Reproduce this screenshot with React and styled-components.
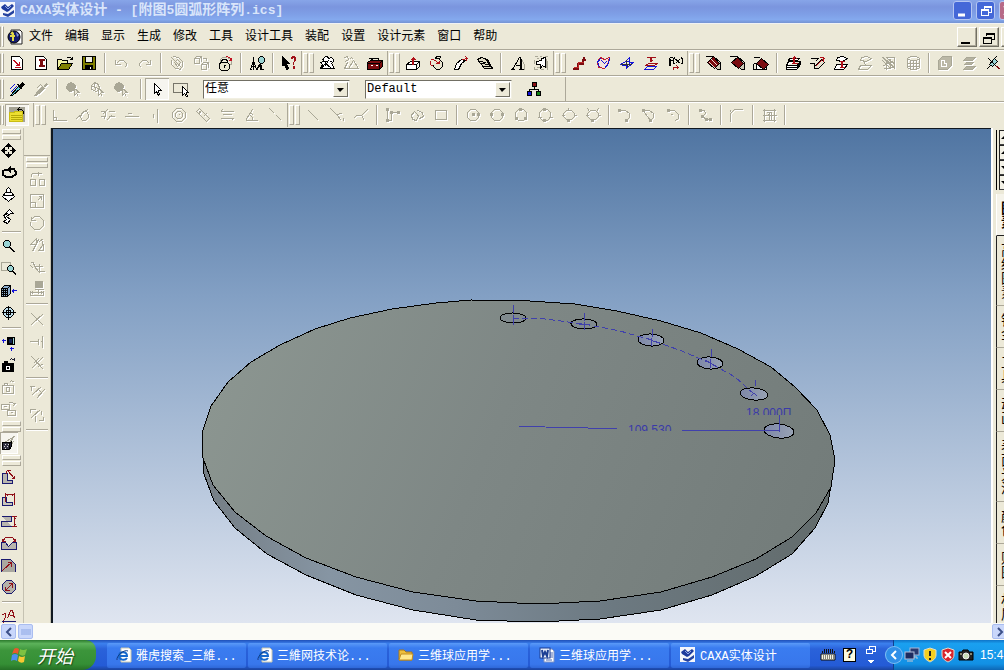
import styled, { createGlobalStyle, css } from 'styled-components';

const RED = '#7b0c10';
const BLUE = '#1414d8';
const TEAL = '#9ad4d4';
const GREY = '#a9a796';

// every shape is [path, stroke, fill], drawn on a 16 x 16 grid
const K = 'currentColor';
const icons = {
  newDoc: [['M2 1H10L13 4V14H2Z', K, '#fff'], ['M4 5L9 10M5 5L10 10M10 10V6M10 10H6M5 12H11', '#c01020']],
  importDoc: [['M2 1H10L13 4V14H2Z', K, '#fff'], ['M5 4H11M5 5H11M5 11H11M5 10H11M8 4V11M7 4V11M9 4V11', RED]],
  open: [['M0 14V4H4L5 5H10V8', K, '#f2f2a0'], ['M0 14L4 8H15L11 14Z', K, '#808000'], ['M9 2H13L15 4V1M15 4H12', K]],
  save: [['M1 1H14V14H1Z', K, '#808000'], ['M4 1H11V7H4Z', K, '#f0efe6'], ['M4 10H11V14H4Z', K, K], ['M9 11V13', '#fff']],
  undo: [['M2 4V9H7M3 8L6 5H10L13 8V10L11 12', K]],
  redo: [['M13 4V9H8M12 8L9 5H5L2 8V10L4 12', K]],
  orbit: [['M2 2L13 13M4 1L9 2L13 6V11L10 14M12 14L6 13L2 9V4M5 7L8 4L11 7L8 11Z', K]],
  cubes: [['M1 3H6V8H1ZM1 3L3 1H8L6 3M8 1V6M8 9H13V14H8ZM8 9L10 7H15L13 9M15 7V12M9 3H13V5', K]],
  lock: [['M3 7V4L5 2H9M10 3H14V9H12', GREY], ['M2 8L4 7H10L12 9V13L10 15H4L2 13Z', K, '#e9e5cf'], ['M4 7V5L6 4H8L10 5V7M7 10V12M6 10H8', K], ['M9 1L12 2L14 5M14 5V2M14 5H11', '#c01020']],
  find: [['M4 1V4M1 14L4 5L7 14M2 11H6M4 5V14M0 14H2M6 14H8M8 14L9 10M11 14V9', K], ['M9 3L11 1H13L15 3V6L13 8H11L9 6Z', K, TEAL], ['M11 8L9 12M12 9V14M12 14H14', K]],
  help: [['M1 1V10L3 9L5 14L7 13L5 8H8Z', K, K], ['M10 3V2H14V5L12 7V9M11 3V1H13M13 2V6L11 8M12 11H13V13H12Z', '#a01018']],
  workers: [['M4 3L6 1H8L9 3L12 2L14 4V6L12 8L15 13H1L3 9L1 7L4 6Z', K, '#fff'], ['M3 4L10 11M9 5L5 11M6 8L12 13M2 6H7M10 6H12M2 13L5 9', K]],
  workersOff: [['M1 2L4 1L5 4L2 6M6 4L8 2L10 4M4 7L1 13H15L10 5L5 13', K]],
  toolbox: [['M0 7L3 5H15V11L12 14H0Z', K, RED], ['M0 8H12V14M12 8L15 5M4 5V3H11V5', K], ['M1 3H4L7 6', K], ['M3 10H5M8 10H10', '#fff']],
  extrude: [['M1 9L5 6H14L11 9ZM1 9V14H11V9M11 14L14 11V6', K, '#fff'], ['M8 9V1M7 9V2M5 4H10M6 3H9', '#b01018']],
  spin: [['M7 1H11L10 4L13 7V11L10 14H7L4 11V9', K, '#e9e5d0'], ['M1 4H4L10 8V5M10 8H6M1 5V9L4 11', '#b01018'], ['M7 1L6 3H9', K]],
  sweep: [['M1 14L3 8L8 4L12 5L8 8L5 14Z', K, '#fff'], ['M9 4L14 3M14 3L12 1M14 3L12 6', '#b01018']],
  loft: [['M0 4L4 2L10 4L15 13H7Z', K, '#dedac4'], ['M1 6L9 7M3 8L11 9M5 11L13 11M4 2L9 4L13 12', K]],
  letterA: [['M12 4L15 9V14', GREY], ['M1 14H5M3 14L10 2H11V14M6 10H11M9 14H14M12 3V13', K]],
  embed: [['M1 1H4M6 1H8M11 1H14M1 4V8M1 11V14H4M7 14H10M13 14H14V5M3 3H5M3 12H6M13 3V12', GREY], ['M3 6L8 5V3L12 2V12L9 10L7 13V9L3 9Z', K, '#fff']],
  flow: [['M1 13H6V8H11V3M10 4H14M12 1V4', RED, 'none', 2], ['M2 12H7M7 12V7H12', '#c02a2a']],
  patch: [['M2 6L5 2L9 4L14 2L12 9L9 13L3 12Z', '#c02030', '#f5e4dd'], ['M2 6L4 12M5 3L2 7M9 13L13 8L14 3M6 5L9 8L11 6', BLUE]],
  cross: [['M1 9L6 6L14 7L9 11Z', BLUE], ['M7 13V5L10 2V10Z', BLUE], ['M7 5L8 12M1 9H12', '#333']],
  offset: [['M3 2H12M7 2V6M8 2V6M6 5H9M5 8H14L11 10H2Z', '#a01018'], ['M4 11H13L10 14H1Z', BLUE]],
  fx: [['M1 5H5M2 10V3L3 2H5M3 10V3M7 2L6 4V7L7 9M8 4L12 8M12 4L8 8M9 4L13 8M14 2L15 4V7L14 9', K], ['M6 14V12H10M9 10L11 12L9 14', '#a01018']],
  edgeRound: [['M8 1L15 7V14H12L6 9', K, '#cfcbb8'], ['M0 1H8M2 7L8 1L14 8L9 13Z', K, RED], ['M4 7L10 13M6 4L12 10', '#f0d8d0']],
  edgeFace: [['M8 1L15 7V14H12L6 9', K, '#cfcbb8'], ['M0 1H8M2 7L8 2L14 8L9 13Z', K, RED]],
  edgeBox: [['M0 2H6M0 8H3V14H13V10', K, '#fff'], ['M3 8L8 3L15 9L10 14Z', K, RED], ['M0 8V14H4', K]],
  stack1: [['M3 6H15L11 10H1ZM1 10V14H11L15 9V5', K, '#fff'], ['M4 3H14L12 5H3Z', K, '#fff'], ['M9 8V1M8 8V2M6 4L9 1L12 4M6 8H12', '#b01018'], ['M1 12H11L15 7', K]],
  stack2: [['M1 3H9L6 6M0 8H5V13H9L15 7L12 4L5 11', K, '#e8e4d2'], ['M6 11L13 4M14 2V6M14 2H10M13 3H15', '#b01018']],
  stack3: [['M4 2L9 1L14 3L9 6L3 5Z', K, '#fff'], ['M3 9H14L10 14H1Z', K, '#fff'], ['M8 12V5M9 12V5M6 6H11M6 12H11', '#b01018']],
  sheets: [['M4 2L9 1L14 3L9 6L3 5ZM3 10H14L10 14H1ZM7 5V8L10 11', K]],
  mesh: [['M1 2L14 14M1 5L9 13M4 2H13V11M6 3L14 9M2 10L12 6M3 13L14 12M5 14V6M9 13V3M2 2L14 13', K]],
  drum: [['M2 3L5 1H11L14 3V12L11 14H5L2 12ZM2 3L5 5H11L14 3M5 5V14M8 5V14M11 5V14M2 8H14M2 11H14', K]],
  blockC: [['M1 5L5 1H14V10L10 14H1Z', K, '#bbb8a6'], ['M4 5V11H9V8H7V5Z', '#fff']],
  slices: [['M5 2H14L11 5H2ZM4 7H12L10 9H2M5 11H14L11 14H2Z', K, '#b5b2a0']],
  tack: [['M3 3L12 12M4 9L9 3L12 6L7 11ZM9 3L11 1M1 14L5 10', K, TEAL], ['M12 11L15 14M11 11L14 14', RED]],
  dropper: [['M1 14L9 5L11 7L3 14Z', K, '#5ac8d8'], ['M8 3L13 8M9 3L13 7', K], ['M10 5L13 1L15 3L11 6Z', K, K], ['M1 11L7 5M0 8L5 3', BLUE]],
  dropperOff: [['M1 14L9 5L11 7L3 14ZM8 4L12 8M10 5L13 2L14 3L11 6M3 7L7 3', K, GREY]],
  pickSolid: [['M2 3L6 1L10 4L9 9L4 10L1 7Z', K, GREY], ['M9 7V14L11 12L13 15M9 7L14 11H11', K, '#e8e4d4']],
  pickFace: [['M2 4L5 1L9 3L10 7L7 10L2 8ZM3 5L9 7M5 2L6 9M9 7V14L11 12L13 15M9 7L14 11H11', K]],
  arrow: [['M5 2V12L7 10L9 14L10 13L9 9H12Z', K, '#fff']],
  boxPick: [['M0 2H14V11H0Z', '#77756a'], ['M9 5V14L11 12L13 15L14 15L13 11H15Z', K, '#fff']],
  tree: [['M8 5V8M3 11V8H12V11', K], ['M6 1H10V5H6Z', K, '#8c1016'], ['M1 10H5V14H1Z', K, BLUE], ['M10 10H14V14H10Z', K, '#108010']],
  folder: [['M0 0H15V14H0Z', '#a5a394', '#a5a394'], ['M0 5H4L6 4H13V14H0Z', '#c9bd13', '#eddf32'], ['M1 8H12M1 10H12M1 12H12', '#b6a90a'], ['M8 2H12L14 4V6M8 2L10 0M8 2L10 4', K]],
  corner: [['M2 2V13H15M2 10H5V13', K]],
  tangent: [['M1 11L13 1M6 6L8 4H11L13 7V10L10 13H7L5 10Z', K]],
  ground: [['M1 4H6M9 4H15M1 9H6M9 9H15M3 7L8 2M7 13L12 8M5 12L6 5', K]],
  horiz: [['M1 9H15M4 6H8', K]],
  vert: [['M10 1V15M6 6V10', K]],
  concentric: [['M5 1H10L14 5V10L10 14H5L1 10V5ZM6 4H9L11 6V9L9 11H6L4 9V6ZM7 7H8', K]],
  perp: [['M1 4L4 1L14 11L11 14ZM4 4L6 6M8 9L11 6M6 3L3 7', K]],
  equal: [['M1 4H14M1 11H14M3 2L1 4M12 13L14 11M3 7H12', K]],
  angle: [['M2 13H14M2 13L9 2M6 7L9 10V13M8 6L10 8', K]],
  diag: [['M2 1L7 6M9 8L14 13', K]],
  line: [['M3 3L13 13', K]],
  arcSplit: [['M1 1L7 7L13 6M7 7L12 13M14 10V13', K]],
  fork: [['M14 2L8 8H3L0 11M8 8L11 13', K]],
  polyline: [['M2 2V13H6V5H14', K], ['M1 1H3V3H1ZM1 12H3V14H1ZM5 4H7V6H5ZM12 4H14V6H12Z', K, K]],
  spline: [['M1 9L5 4L9 8L7 13L3 12L2 8M8 3L13 5L14 9L10 11M7 8H9', K]],
  rect: [['M2 3H13V12H2Z', K]],
  circ1: [['M5 2H10L13 5V10L10 13H5L2 10V5Z', K], ['M7 6H9V8H7ZM12 6H14V8H12Z', K, K]],
  circ2: [['M5 2H10L13 5V10L10 13H5L2 10V5Z', K], ['M1 6H3V8H1ZM12 6H14V8H12Z', K, K]],
  circ3: [['M5 2H10L13 5V10L10 13H5L2 10V5Z', K], ['M6 1H8V3H6ZM2 10H4V12H2ZM11 10H13V12H11Z', K, K]],
  circ4: [['M5 2H10L13 5V10L10 13H5L2 10V5ZM0 10H4M11 10H15', K], ['M6 1H8V3H6ZM6 12H8V14H6Z', K, K]],
  circ5: [['M5 3H10L13 6V9L10 12H5L2 9V6ZM0 8H3M12 8H15M7 0V3', K], ['M6 12H8V14H6Z', K, K]],
  circ6: [['M5 3H10L13 6V9L10 12H5L2 9V6ZM2 1L4 4M13 1L11 4M0 8H3M12 8H15', K], ['M6 12H8V14H6Z', K, K]],
  arc1: [['M2 3H8L12 6V10L9 13', K], ['M1 2H3V4H1ZM8 12H10V14H8Z', K, K]],
  arc2: [['M2 3H8L12 6V10L9 13L3 5', K], ['M1 2H3V4H1ZM8 12H10V14H8Z', K, K]],
  arc3: [['M3 3H9L13 7V11L10 13M5 7H7', K], ['M2 2H4V4H2Z', K, K]],
  curve: [['M3 3H7L8 6L5 9L9 12H13', K], ['M2 2H4V4H2ZM4 8H6V10H4ZM8 11H10V13H8ZM12 11H14V13H12Z', K, K]],
  fillet: [['M1 14V6L5 2H13M1 2V4', K]],
  dims: [['M1 3H14M1 8H15M1 13H14M3 1V14M5 5L9 5L6 9M10 4V12M13 1V14M8 8V13', K]],
  move: [['M7 1V14M0 7H14', K], ['M7 0L4 3H10ZM7 14L4 11H10ZM0 7L3 4V10ZM14 7L11 4V10Z', K, K], ['M6 6H8V8H6Z', '#ece9d8', '#ece9d8']],
  rotate: [['M9 3H12L14 6V9L11 11H4L1 9V6L4 4H8', K, 'none', 2], ['M6 4L9 1V7Z', K, K]],
  pushBox: [['M5 5V2L7 0L9 2V5M4 5H10L13 9L7 14L1 9Z', K, '#fff'], ['M2 8H12', K]],
  snake: [['M4 4L8 0L12 4H9L5 7L9 10L6 14L2 12L5 10L2 6L6 4Z', K, '#fff']],
  zoom: [['M2 3L4 1H7L9 3V6L7 8H4L2 6Z', K, TEAL], ['M8 8L13 13M9 8L14 13', K]],
  zoomBox: [['M0 1H9V9H0Z', GREY], ['M6 6L8 4H10L12 6V8L10 10H8L6 8Z', K, TEAL], ['M11 10L15 14M12 10L15 13', K]],
  faceCam: [['M0 5L3 2H9V10L6 13H0Z', K, '#8fb0d0'], ['M0 5H6V13M6 5L9 2M0 7H6M0 9H6M0 11H6M2 5V13M4 5V13', K], ['M15 7H10M12 5V9M11 6V8', BLUE]],
  target: [['M5 2H9L12 5V9L9 12H5L2 9V5Z', K, '#bfe0ee'], ['M7 0V14M0 7H14M5 5H9V9H5Z', K]],
  addView: [['M6 2H13V9H6Z', K, TEAL], ['M7 3H11V8H7Z', K, '#102050'], ['M0 5H4M2 3V7M10 11V15M8 13H12', BLUE]],
  camera: [['M1 6H12V14H1ZM3 6V4H6V6', K, K], ['M5 9H8V12H5Z', '#fff', '#fff'], ['M6 10H7V11H6Z', K], ['M8 3L10 1L13 3M13 3V0', '#223']],
  cameraOff: [['M1 6H12V14H1ZM3 6V4H6V6M5 8H8V12H5ZM8 3L10 1L13 3', K]],
  cameras: [['M0 3H8V8H0ZM6 9H14V14H6ZM2 5H5M9 11H11M8 1L14 2L11 5', K]],
  perspective: [['M1 8L13 1L7 8M7 14L12 6', GREY], ['M1 7H8V14H1Z', K, '#334'], ['M3 9H4M6 9H7M2 11H3M5 11H6M3 13H4', '#ddd'], ['M8 8L10 6V11L8 14', K, '#223']],
  dim1: [['M1 4V14H11V11H6V4Z', '#1a1a70', '#b9b6ae'], ['M6 1L13 9M5 1V4M6 1H9M13 9V6M13 9H10', '#901018']],
  dim2: [['M1 6V14H11V11H5V6Z', '#1a1a70', '#c9c6ba'], ['M4 1V10M13 1V13M4 3H13M6 2V4M11 2V4', '#901018']],
  dim3: [['M0 3H10V8H0V13H10', '#1a1a70', '#b9b6ae'], ['M10 3H15M10 13H15M13 3V13M12 5H14M12 11H14', '#901018']],
  dim4: [['M0 7H4L7 11L11 7H15V14H0Z', '#1a1a70', '#b9b6ae'], ['M1 6L4 2H11L14 6M1 3V6H4M14 3V6H11', '#901018']],
  dim5: [['M0 14V2H9L14 7V14', '#1a1a70', '#aaa8a0'], ['M1 13L10 5M10 5H6M10 5V9', '#901018']],
  dim6: [['M5 1H10L14 5V10L10 14H5L1 10V5Z', '#1a1a70', '#b5b2aa'], ['M4 11L11 4M11 4H7M11 4V8M4 11H8M4 11V7', '#901018']],
  dimText: [['M6 9L9 1H11L13 9M8 6H12M1 5L4 4V8L2 11V13', '#901018'], ['M0 12H14', '#1a1a70']],
  bDist: [['M1 8H6V14H1ZM10 8H15V14H10ZM2 2H12M9 0V4M2 5V2', K]],
  bScale: [['M1 1H14V14H1ZM1 9H6V14M8 7L12 3M12 3H9M12 3V6', K]],
  bTurn: [['M2 4L5 1H10L14 5V10L10 14H5L1 10V6M2 1V5H6', K]],
  bMirror: [['M1 7L7 1V7ZM9 2L3 14M9 13L14 7V13ZM10 4L14 1M13 3V8', K]],
  bBend: [['M1 3L4 3L5 7L9 12H15M5 7H13M10 4V13M1 6L4 9', K]],
  bStamp: [['M6 0H13V6H6Z', K, GREY], ['M5 8H14M1 9V14H14V9M3 9V12M9 7V12M12 9V12M1 11H14', K]],
  bCut: [['M2 2L14 14M14 2L2 13', K]],
  bExtend: [['M0 8H8M11 8H12M13 2V14M9 5V11', K]],
  bBreak: [['M2 1L14 14M13 2L2 13M4 8L9 3M9 11L14 8', K]],
  bHatch: [['M3 9L12 1M7 13L15 4M0 1H5M2 1V5M9 4L12 7', K]],
  bOffset: [['M0 2H6M1 2V5M2 10L11 2M6 8V14M12 3V7M9 13H14M14 9V13', K]],
};

function Icon({ name, off }) {
  return (
    <Glyph viewBox="-0.5 -0.5 16 16" $off={off} aria-hidden="true">
      {icons[name].map(([d, stroke, fill = 'none', width = 1], i) => (
        <path key={i} d={d} stroke={stroke} fill={fill} strokeWidth={width} />
      ))}
    </Glyph>
  );
}

// '|' is a separator, '-' in front of a name greys it, '+' shows it pressed
function Tools({ items, vertical }) {
  return items.split(' ').map((item, i) => {
    if (item === '|') return <Separator key={i} $vertical={vertical} />;
    const off = item[0] === '-';
    const name = item.replace(/^[-+]/, '');
    return (
      <Tool key={i} aria-label={name} disabled={off} $vertical={vertical} $pressed={item[0] === '+'}>
        <Icon name={name} off={off} />
      </Tool>
    );
  });
}

const menus = ['文件', '编辑', '显示', '生成', '修改', '工具', '设计工具', '装配', '设置', '设计元素', '窗口', '帮助'];
const catalogs = ['高级图素', '钣金', '工具', '动画', '表面光泽', '颜色', '贴图', '材质'];
const tasks = [
  { icon: 'ie', label: '雅虎搜索_三維...' },
  { icon: 'ie', label: '三維网技术论...' },
  { icon: 'dir', label: '三维球应用学...' },
  { icon: 'word', label: '三维球应用学...' },
  { icon: 'caxa', label: 'CAXA实体设计' },
];

const plateTop =
  '202,433 211,406 228,382 251,362 280,345 315,329 350,318 392,309 436,303 471,300 530,301 575,304 617,311 661,321 701,333 738,349 771,367 795,387 817,410 830,435 835,460 831,487 816,513 792,537 756,559 712,577 661,592 600,601 538,604 476,601 413,592 356,577 306,558 266,536 235,512 213,485 203,458';
const plateSide =
  '203,458 204,474 214,501 235,528 267,554 306,575 356,595 413,610 476,620 538,622 600,619 661,610 712,595 756,576 792,554 815,528 828,503 834,466 831,487 816,513 792,537 756,559 712,577 661,592 600,601 538,604 476,601 413,592 356,577 306,558 266,536 235,512 213,485';
const holes = [
  [513, 318, 13, 5],
  [584, 324, 13, 5],
  [651, 340, 13, 6],
  [710, 363, 13, 6],
  [754, 394, 14, 6],
  [779, 431, 15, 7],
];

function Model() {
  return (
    <Scene viewBox="53 129 938 494" preserveAspectRatio="xMidYMid meet">
      <defs>
        <linearGradient id="plate" x1="0" y1="0.4" x2="1" y2="0.6">
          <stop offset="0" stopColor="#8b9590" />
          <stop offset="0.45" stopColor="#7e8785" />
          <stop offset="1" stopColor="#737c7a" />
        </linearGradient>
        <linearGradient id="side">
          <stop offset="0" stopColor="#747d84" />
          <stop offset="0.2" stopColor="#8695a3" />
          <stop offset="0.4" stopColor="#7d8b98" />
          <stop offset="0.65" stopColor="#6c7981" />
          <stop offset="1" stopColor="#626b6b" />
        </linearGradient>
        <linearGradient id="hole">
          <stop offset="0" stopColor="#7d87a8" />
          <stop offset="1" stopColor="#98a3b4" />
        </linearGradient>
        <clipPath id="cut">
          <path d="M600 418H700V431H600ZM730 400H810V415H730Z" />
        </clipPath>
      </defs>
      <polygon points={plateSide} fill="url(#side)" stroke="#000" shapeRendering="crispEdges" />
      <polygon points={plateTop} fill="url(#plate)" stroke="#000" shapeRendering="crispEdges" />
      {holes.map(([cx, cy, rx, ry], i) => (
        <ellipse
          key={cx}
          cx={cx}
          cy={cy}
          rx={rx}
          ry={ry}
          fill={i < 2 ? '#808a8e' : 'url(#hole)'}
          stroke="#000"
          shapeRendering="crispEdges"
          transform={`rotate(${i + 1} ${cx} ${cy})`}
        />
      ))}
      <g fill="none" stroke="#4040ac" shapeRendering="crispEdges">
        <path d="M513 318L545 319L584 324L620 331L651 340L682 351L710 363L735 377L754 394" strokeDasharray="6 3" />
        <path d="M513 305V313M513 315V325M585 313L584 321M584 322V330M579 324H590M652 329V337M651 338V346M646 338L658 343M711 349V357M710 359V368M705 360L716 366M755 380V386M751 396L754 393L757 396" />
        <path d="M519 426L545 427L588 428H617M682 430H706L779 431V415" />
      </g>
      <g clipPath="url(#cut)" fill="#3a3aa8" fontFamily="Liberation Sans, sans-serif" fontSize="12">
        <text x="628" y="434">109.530</text>
        <text x="746" y="417">18.000П</text>
      </g>
    </Scene>
  );
}

function Logo({ kind }) {
  return (
    <LogoSvg viewBox="0 0 16 16" aria-hidden="true">
      {kind === 'caxa' && (
        <>
          <rect width="15" height="15" fill="#f4f6fb" />
          <path d="M1 5L5 2L8 5L12 2L14 4L9 9L7 10L2 7Z" fill="#1d3a9c" />
          <path d="M5 4L8 7L11 4" stroke="#8fa4e0" fill="none" />
          <path d="M3 11L8 12L14 8V11L8 15L3 13Z" fill="#24429f" />
        </>
      )}
      {kind === 'doc' && (
        <>
          <path d="M4 1H13L15 3V15H4Z" fill="#fff" stroke="#222" />
          <circle cx="7" cy="8" r="6" fill="#141c6c" stroke="#000" />
          <path d="M3 7H8M6 4V12M4 5L6 3" stroke="#e2da48" strokeWidth="2" fill="none" />
          <path d="M9 3L12 6L10 8Z" fill="#8494d8" />
        </>
      )}
      {kind === 'ie' && (
        <>
          <path d="M5 1H13L15 3V15H5Z" fill="#fff" stroke="#c8c8b0" />
          <path d="M11 11C9 14 3 13 3 9C3 4 11 4 11 9H4" fill="none" stroke="#1668ce" strokeWidth="2" />
          <path d="M1 13C0 9 8 2 12 4" fill="none" stroke="#123c86" />
        </>
      )}
      {kind === 'dir' && (
        <>
          <path d="M1 3H6L8 5H14V13H1Z" fill="#edbf3c" stroke="#a8791a" />
          <path d="M3 7H15L14 13H1Z" fill="#ffe88c" stroke="#c08c20" />
        </>
      )}
      {kind === 'word' && (
        <>
          <path d="M5 2H13L15 4V15H5Z" fill="#fff" stroke="#7f93c4" />
          <path d="M11 6H14M11 8H14M11 10H14M7 13H13" stroke="#4a68b4" />
          <rect x="1" y="1" width="10" height="10" fill="#e6edfa" stroke="#1d3f94" />
          <path d="M3 3L4 9L6 5L8 9L9 3" fill="none" stroke="#1d3f94" strokeWidth="2" />
        </>
      )}
      {kind === 'keyboard' && (
        <>
          <path d="M1 7H15V13H1Z" fill="#f6f4e2" stroke="#111" />
          <path d="M3 9H14M3 11H14" stroke="#111" strokeDasharray="1 1" />
          <path d="M2 5H15M4 3H13" stroke="#111" strokeWidth="2" strokeDasharray="1 1" />
        </>
      )}
      {kind === 'net' && (
        <>
          <rect x="6" y="1" width="9" height="7" fill="#283a70" stroke="#a9b8d8" />
          <rect x="1" y="5" width="9" height="7" fill="#1c2b60" stroke="#b5c2dc" />
          <path d="M3 14H9M10 10H13V12" stroke="#c8c8d0" fill="none" />
        </>
      )}
      {(kind === 'shield' || kind === 'alert') && (
        <>
          <path
            d="M8 1L14 3V8C14 12 10 14 8 15C6 14 2 12 2 8V3Z"
            fill={kind === 'shield' ? '#f5cf20' : '#d8242c'}
            stroke="#dcdcd0"
          />
          {kind === 'shield' ? (
            <path d="M8 4V9M8 11V13" stroke="#222" strokeWidth="2" />
          ) : (
            <path d="M5 5L11 11M11 5L5 11" stroke="#fff" strokeWidth="2" />
          )}
        </>
      )}
      {kind === 'photo' && (
        <>
          <path d="M1 5H4L5 3H10L11 5H15V13H1Z" fill="#222" stroke="#000" />
          <circle cx="8" cy="9" r="3" fill="#c8ddb8" stroke="#eee" />
          <path d="M2 7H4M12 7H14" stroke="#e8e8c0" />
        </>
      )}
      {kind === 'flag' && (
        <>
          <path d="M3 2Q5 0 8 2L7 7Q4 5 1 7Z" fill="#e8582c" />
          <path d="M9 2Q12 4 16 2L14 8Q11 10 8 7Z" fill="#7dc242" />
          <path d="M1 8Q4 6 7 8L6 14Q3 12 0 14Z" fill="#4c8ef0" />
          <path d="M8 9Q11 11 14 9L13 15Q10 17 7 14Z" fill="#f8c832" />
        </>
      )}
    </LogoSvg>
  );
}

function Picker({ label, value }) {
  return (
    <PickerBox>
      <PickerSelect aria-label={label} defaultValue={value}>
        <option>{value}</option>
      </PickerSelect>
      <PickerArrow viewBox="0 0 13 13" aria-hidden="true">
        <path d="M3 5H10L6 9Z" />
      </PickerArrow>
    </PickerBox>
  );
}

export default function App() {
  return (
    <Desktop>
      <GlobalStyle />
      <TitleBar>
        <Logo kind="caxa" />
        <Title>
          <Latin>CAXA</Latin>实体设计<Latin> - [</Latin>附图<Latin>5</Latin>圆弧形阵列<Latin>.ics]</Latin>
        </Title>
        <TitleButton aria-label="最小化">
          <svg width="18" height="18"><path d="M4 13H11" stroke="#fff" strokeWidth="3" /></svg>
        </TitleButton>
        <TitleButton aria-label="还原">
          <svg width="18" height="18" fill="none" stroke="#fff" shapeRendering="crispEdges">
            <path d="M7 7V4H14V10H11M7 5H14M4 7H11V13H4ZM4 8H11" />
          </svg>
        </TitleButton>
        <TitleButton aria-label="关闭" $close>
          <svg width="18" height="18"><path d="M4 4L13 13M13 4L4 13" stroke="#fff" strokeWidth="2" /></svg>
        </TitleButton>
      </TitleBar>

      <MenuBar>
        <Grip $first />
        <MenuLogo><Logo kind="doc" /></MenuLogo>
        {menus.map((menu) => (
          <MenuItem key={menu}>{menu}</MenuItem>
        ))}
        <Fill />
        <ChildButton aria-label="最小化窗口">
          <svg width="16" height="16"><path d="M3 14H12" stroke="#000" strokeWidth="2" /></svg>
        </ChildButton>
        <ChildButton aria-label="还原窗口">
          <svg width="16" height="16" fill="none" stroke="#000" shapeRendering="crispEdges">
            <path d="M6 7V4H14V10H11M6 5H14M3 8H11V14H3ZM3 9H11" />
          </svg>
        </ChildButton>
        <ChildButton aria-label="关闭窗口">
          <svg width="16" height="16"><path d="M4 4L12 12M12 4L4 12" stroke="#000" strokeWidth="2" /></svg>
        </ChildButton>
      </MenuBar>

      <Toolbar>
        <Grip $first />
        <Tools items="newDoc importDoc open save | -undo -redo | -orbit -cubes lock | find | help" />
        <Grip />
        <Tools items="workers -workersOff toolbox" />
        <Grip />
        <Tools items="extrude spin sweep loft | letterA embed" />
        <Grip />
        <Tools items="flow patch cross offset fx" />
        <Grip />
        <Tools items="edgeRound edgeFace edgeBox | stack1 stack2 stack3 -sheets -mesh -drum | -blockC -slices tack" />
      </Toolbar>

      <Toolbar>
        <Grip $first />
        <Tools items="dropper -dropperOff | -pickSolid -pickFace -pickSolid" />
        <Gap />
        <Tools items="| +arrow boxPick" />
        <Pickers>
          <Picker label="选择过滤" value="任意" />
          <Picker label="样式" value="Default" />
        </Pickers>
        <Tools items="tree" />
        <BarEnd />
      </Toolbar>

      <Toolbar $last>
        <Grip $first />
        <Tools items="+folder" />
        <Gap />
        <Grip />
        <Tools items="-corner -tangent -ground -horiz -vert -concentric -perp -equal -angle -diag" />
        <Grip />
        <Tools items="-line -arcSplit -fork | -polyline -spline -rect | -circ1 -circ2 -circ3 -circ4 -circ5 -circ6 | -arc1 -arc2 -arc3 | -curve | -fillet | -dims" />
        <Separator />
      </Toolbar>

      <Workspace>
        <SideBar $width={24}>
          <SideGrip />
          <Tools vertical items="move rotate pushBox snake | zoom zoomBox faceCam target | addView camera -cameraOff -cameras" />
          <SideGrip />
          <Tools vertical items="+perspective" />
          <SideGrip />
          <Tools vertical items="dim1 dim2 dim3 dim4 dim5 dim6 | dimText" />
        </SideBar>
        <SideBar $width={27}>
          <SideBlank />
          <SideGrip />
          <Tools vertical items="-bDist -bScale -bTurn -bMirror -bBend -bStamp | -bCut -bExtend -bBreak | -bHatch -bOffset" />
          <Separator $vertical />
        </SideBar>
        <Canvas>
          <Model />
        </Canvas>
        <CatalogPane>
          <CatalogButtons>
            {['上翻', '下翻', '前移', '后移'].map((label, i) => (
              <CatalogButton key={label} aria-label={label}>
                <svg width="14" height="13">
                  <path d={i < 2 ? 'M1 8H9L5 4Z' : 'M1 5H9L5 9Z'} />
                </svg>
              </CatalogButton>
            ))}
          </CatalogButtons>
          <CatalogTab $active>图素</CatalogTab>
          {catalogs.map((name) => (
            <CatalogTab key={name}>{name}</CatalogTab>
          ))}
        </CatalogPane>
      </Workspace>

      <ScrollBar>
        <ScrollButton aria-label="向左滚动">
          <svg width="12" height="12"><path d="M8 2L4 6L8 10" fill="none" stroke="#3c5088" strokeWidth="2" /></svg>
        </ScrollButton>
        <ScrollButton aria-label="滑块">
          <svg width="12" height="12"><path d="M2 3V9M4 3V9M6 3V9M8 3V9M10 3V9" stroke="#8ba6e4" /></svg>
        </ScrollButton>
        <Fill />
        <ScrollButton aria-label="向右滚动">
          <svg width="12" height="12"><path d="M4 2L8 6L4 10" fill="none" stroke="#3c5088" strokeWidth="2" /></svg>
        </ScrollButton>
      </ScrollBar>

      <TaskBar>
        <StartButton>
          <Logo kind="flag" />
          开始
        </StartButton>
        {tasks.map((task, i) => (
          <Task key={i}>
            <Logo kind={task.icon} />
            {task.label}
          </Task>
        ))}
        <InputTools>
          <Logo kind="keyboard" />
          <HelpMark>?</HelpMark>
          <svg width="12" height="20" fill="none" stroke="#fff" shapeRendering="crispEdges">
            <path d="M4 4V1H10V6H7M1 4H7V8H1Z" />
            <path d="M2 15H9L6 18Z" fill="#fff" stroke="none" />
          </svg>
        </InputTools>
        <Tray>
          <TrayToggle aria-label="隐藏图标">
            <svg width="16" height="16"><path d="M10 4L6 8L10 12" fill="none" stroke="#fff" strokeWidth="2" /></svg>
          </TrayToggle>
          <Logo kind="net" />
          <Logo kind="shield" />
          <Logo kind="alert" />
          <Logo kind="photo" />
          <Clock>15:4</Clock>
        </Tray>
      </TaskBar>
    </Desktop>
  );
}

const GlobalStyle = createGlobalStyle`
  * {
    box-sizing: border-box;
  }
  body {
    margin: 0;
    font: 12px 'Liberation Mono', 'Noto Sans CJK SC', sans-serif;
    background: #ece9d8;
    color: #000;
  }
  button {
    padding: 0;
    border: 0;
    background: none;
    font: inherit;
    color: inherit;
    flex-shrink: 0;
  }
  svg {
    display: block;
    flex-shrink: 0;
  }
`;
const Desktop = styled.div`
  display: flex;
  flex-direction: column;
  height: 100vh;
  overflow: hidden;
  background: #ece9d8;
`;
const Fill = styled.span`
  flex: 1;
`;
const Gap = styled.span`
  width: 4px;
  flex-shrink: 0;
`;
const Glyph = styled.svg`
  width: 16px;
  height: 16px;
  color: ${(p) => (p.$off ? GREY : '#000')};
  shape-rendering: crispEdges;
  ${(p) => p.$off && 'filter: drop-shadow(1px 1px 0 #fff);'}
`;
const LogoSvg = styled.svg`
  width: 16px;
  height: 16px;
`;
const TitleBar = styled.header`
  display: flex;
  align-items: center;
  gap: 4px;
  height: 24px;
  padding-bottom: 3px;
  margin-right: -14px;
  flex-shrink: 0;
  border-bottom: 1px solid #f0f2f4;
  background: linear-gradient(#87a5e8, #7b95de 30%, #7e9ee6 60%, #84a9ee 85%, #7593d2);
`;
const Title = styled.h1`
  margin: 0;
  flex: 1;
  font-size: 14px;
  line-height: 20px;
  color: #d9e5fa;
  white-space: pre;
`;
const Latin = styled.span`
  font-size: 13px;
`;
const TitleButton = styled.button`
  width: 19px;
  height: 19px;
  border: 1px solid #b4c6f2;
  border-radius: 3px;
  background: ${(p) => (p.$close ? '#b76a88' : '#4468d8')};
`;
const MenuBar = styled.nav`
  display: flex;
  align-items: center;
  height: 26px;
  flex-shrink: 0;
  margin-right: -19px;
  border-bottom: 1px solid #aca899;
`;
const MenuLogo = styled.span`
  padding: 0 0 0 2px;
`;
const MenuItem = styled.button`
  padding: 1px 6px 0;
  line-height: 20px;
`;
const ChildButton = styled.button`
  width: 20px;
  height: 20px;
  margin-right: 2px;
  border: 1px solid;
  border-color: #fff #716f64 #716f64 #fff;
  box-shadow: inset -1px -1px #aca899;
`;
const Toolbar = styled.div`
  display: flex;
  align-items: center;
  height: 26px;
  flex-shrink: 0;
  overflow: hidden;
  border-top: 1px solid #fff;
  border-bottom: 1px solid ${(p) => (p.$last ? '#ece9d8' : '#aca899')};
`;
const Grip = styled.span`
  width: ${(p) => (p.$first ? 5 : 14)}px;
  align-self: stretch;
  flex-shrink: 0;
  display: flex;
  justify-content: flex-end;
  gap: 1px;
  padding: 2px 1px 2px 0;
  border-left: ${(p) => (p.$first ? 0 : '1px solid #aca899')};
  &::before,
  &::after {
    content: '';
    width: ${(p) => (p.$first ? 2 : 3)}px;
    border: 1px solid;
    border-color: #fff #aca899 #aca899 #fff;
  }
`;
const Separator = styled.span`
  flex-shrink: 0;
  ${(p) =>
    p.$vertical
      ? css`
          height: 2px;
          margin: 3px 2px;
          align-self: stretch;
          border-top: 1px solid #aca899;
          border-bottom: 1px solid #fff;
        `
      : css`
          width: 2px;
          margin: 2px 3px;
          align-self: stretch;
          border-left: 1px solid #aca899;
          border-right: 1px solid #fff;
        `}
`;
const Tool = styled.button`
  display: flex;
  align-items: center;
  justify-content: center;
  width: ${(p) => (p.$vertical ? 18 : 24)}px;
  height: 22px;
  ${(p) =>
    p.$pressed &&
    css`
      background: #f6f5ef;
      box-shadow: inset 1px 1px #aca899, inset -1px -1px #fff;
    `}
`;
const Pickers = styled.div`
  display: flex;
  gap: 15px;
  padding: 0 10px;
`;
const PickerBox = styled.div`
  display: flex;
  align-items: center;
  width: 147px;
  height: 19px;
  padding: 1px;
  background: #fff;
  border: 1px solid;
  border-color: #716f64 #f1efe2 #f1efe2 #716f64;
`;
const PickerSelect = styled.select`
  appearance: none;
  flex: 1;
  min-width: 0;
  height: 15px;
  padding: 0;
  border: 0;
  background: #fff;
  color: #000;
  font: 12px/15px 'Liberation Mono', 'Noto Sans CJK SC', sans-serif;
`;
const PickerArrow = styled.svg`
  width: 15px;
  height: 15px;
  background: #ece9d8;
  border: 1px solid;
  border-color: #fff #716f64 #716f64 #fff;
`;
const BarEnd = styled.span`
  align-self: stretch;
  width: 20px;
  border-right: 1px solid #aca899;
`;
const Workspace = styled.main`
  display: flex;
  flex: 1;
  min-height: 0;
`;
const SideBar = styled.div`
  display: flex;
  flex-direction: column;
  align-items: ${(p) => (p.$width > 24 ? 'center' : 'flex-start')};
  width: ${(p) => p.$width}px;
  flex-shrink: 0;
  overflow: hidden;
  border-right: 1px solid #c5c2b2;
`;
const SideGrip = styled.span`
  flex-shrink: 0;
  align-self: stretch;
  display: flex;
  flex-direction: column;
  justify-content: center;
  height: 12px;
  padding: 0 2px;
  gap: 1px;
  &::before,
  &::after {
    content: '';
    height: 3px;
    border: 1px solid;
    border-color: #fff #aca899 #aca899 #fff;
  }
`;
const SideBlank = styled.span`
  align-self: stretch;
  flex-shrink: 0;
  height: 28px;
  border-bottom: 1px solid #aca899;
`;
const Canvas = styled.section`
  flex: 1;
  min-width: 0;
  border-top: 1px solid #101820;
  border-left: 2px solid #101820;
  background: linear-gradient(#5075a2, #83a0c4 34%, #a7bbd5 60%, #dfe5f0);
`;
const Scene = styled.svg`
  width: 100%;
  height: 100%;
`;
const CatalogPane = styled.aside`
  width: 13px;
  flex-shrink: 0;
  overflow: hidden;
  border-left: 2px solid #fff;
  padding: 2px 0 0 3px;
`;
const CatalogButtons = styled.div`
  display: flex;
  flex-direction: column;
  width: 24px;
  border-left: 1px solid #000;
  padding-left: 2px;
  margin-bottom: 4px;
`;
const CatalogButton = styled.button`
  width: 20px;
  height: 15px;
  border: 1px solid;
  border-color: #222 #404040 #404040 #222;
  background: #f3f1e6;
`;
const CatalogTab = styled.div`
  width: 24px;
  padding: 7px 2px 6px;
  border-left: 1px solid ${(p) => (p.$active ? '#fff' : '#222')};
  border-bottom: 1px solid ${(p) => (p.$active ? '#222' : '#aca899')};
  background: ${(p) => (p.$active ? '#f5f3ea' : '#ece9d8')};
  font-size: 14px;
  font-weight: ${(p) => (p.$active ? 700 : 400)};
  line-height: 14px;
  writing-mode: vertical-lr;
`;
const ScrollBar = styled.div`
  display: flex;
  align-items: center;
  gap: 2px;
  height: 17px;
  flex-shrink: 0;
  padding-left: 1px;
  margin-right: -3px;
  background: #fbfbf6;
`;
const ScrollButton = styled.button`
  width: 15px;
  height: 15px;
  padding-left: 1px;
  border: 1px solid #a9bdf0;
  border-radius: 2px;
  background: #c9d7fb;
`;
const TaskBar = styled.footer`
  display: flex;
  align-items: center;
  height: 30px;
  flex-shrink: 0;
  overflow: hidden;
  background: linear-gradient(#1f50b8, #3c80ee 12%, #2a62da 30%, #245bd6 85%, #1b449e);
  color: #fff;
`;
const StartButton = styled.button`
  display: flex;
  align-items: center;
  gap: 10px;
  width: 96px;
  height: 30px;
  padding-left: 11px;
  margin-right: 11px;
  border-radius: 0 10px 14px 0;
  background: linear-gradient(#2b7a2c, #5cb25a 12%, #3c953b 35%, #358f35 80%, #256f26);
  font-size: 18px;
  font-style: italic;
  text-shadow: 1px 1px 1px #1c4a1c;
`;
const Task = styled.button`
  display: flex;
  align-items: center;
  gap: 4px;
  flex: 0 1 139px;
  height: 25px;
  padding-left: 9px;
  margin-right: 2px;
  overflow: hidden;
  border-radius: 2px;
  background: linear-gradient(#5a9af8, #3a7cf0 20%, #3877ec 85%, #2f68d8);
  font: 12px 'Liberation Mono', 'Noto Sans CJK SC', sans-serif;
  white-space: nowrap;
`;
const InputTools = styled.div`
  display: flex;
  align-items: center;
  gap: 7px;
  flex: 1;
  padding-left: 8px;
`;
const HelpMark = styled.span`
  width: 13px;
  height: 14px;
  margin-right: 2px;
  border: 1px solid #000;
  background: #fdfbe0;
  color: #000;
  font-weight: 700;
  line-height: 12px;
  text-align: center;
`;
const Tray = styled.div`
  display: flex;
  align-items: center;
  gap: 2px;
  height: 30px;
  border-left: 1px solid #123f8c;
  background: linear-gradient(#0f74c8, #1aa0f0 12%, #1290e4 80%, #0d66b4);
`;
const TrayToggle = styled.button`
  width: 16px;
  height: 16px;
  border-radius: 8px;
  margin-left: -8px;
  background: #2f8fe8;
  box-shadow: 0 0 0 1px #7fc0f4;
`;
const Clock = styled.span`
  width: 28px;
  padding-left: 4px;
  font-family: 'Liberation Sans', sans-serif;
`;
